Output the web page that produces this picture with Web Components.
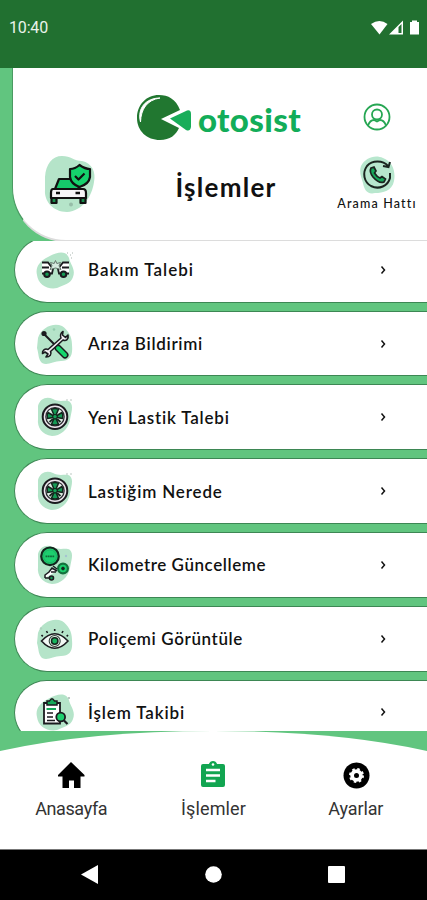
<!DOCTYPE html>
<html lang="tr">
<head>
<meta charset="utf-8">
<title>otosist</title>
<style>
  body {
    margin: 0;
    font-family: Lato, "Open Sans", sans-serif;
    color: #111;
  }
</style>
</head>
<body>
<oto-app></oto-app>

<script>
const BLOBS = {
  a: 'M3 26C1 18 6 12 14 8C23 3 32 1 35 9C36 15 42 20 39 28C37 35 29 36 23 39C13 41 4 35 3 26Z',
  b: 'M4 15C7 5 19-1 28 3C34 7 38 13 38 22C39 33 36 38 27 38C19 38 14 43 8 40C4 36 5 32 3 25Z',
  c: 'M4 10C6 2 13 0 19 3C26 7 32 3 36 6C40 10 37 17 36 24C34 34 26 40 18 40C8 39 3 31 4 23Z',
};

const WHEEL = `
  <circle cx="21" cy="20.7" r="12.3" fill="#ece6ec" stroke="#1b1b1f" stroke-width="2"/>
  <circle cx="21" cy="20.7" r="9.2" fill="#dfeee5" stroke="#2a2a30" stroke-width="1.2"/>
  <g fill="#159a55" stroke="#14251d" stroke-width="1.5" stroke-linejoin="round">
    <path d="M17.5 13.2Q21 11.8 24.5 13.2L22 19H20Z"/>
    <path d="M17.5 28.2Q21 29.6 24.5 28.2L22 22.4H20Z"/>
    <path d="M14 16.5L19 19.5V21.5L13.4 22.5Q12.600 19 14 16.500Z"/>
    <path d="M28 16.500L23 19.500V21.500L28.600 22.500Q29.400 19 28 16.500Z"/>
  </g>
  <path d="M15.500 26L19 23M26.500 26L23 23" stroke="#14251d" stroke-width="1.800"/>
  <circle cx="21" cy="20.7" r="2.2" fill="#13a558" stroke="#14251d"/>
  <path d="M32 4h2M36 4h2" stroke="#bcc9c2"/>`;

const ICONS = {
  crash: {
    blob: 'a',
    art: `
      <g fill="#fff" stroke="#1b1b1f" stroke-width="1.8">
        <path d="M8 13.500H14L19 20L18 24.500H8" />
        <path d="M35 13.500H29L24 20L25 24.500H35" />
        <path d="M8 18.500H15M35 18.500H28"/>
      </g>
      <path d="M21.5 11.500L22.800 14.500L26.500 13.500L25 16.800L27 20.500L21.500 19L16 20.500L18 16.800L16.500 13.500L20.200 14.500Z" fill="#d5eadf" stroke="#65776d"/>
      <g fill="#159a55" stroke="#1b1b1f" stroke-width="2">
        <circle cx="13" cy="25.3" r="2.8"/><circle cx="29.5" cy="25.3" r="2.8"/>
      </g>
      <path d="M33 4h1M36 6h1M38 4h1M37 9h1" stroke="#a8b5ae"/>`,
  },
  tools: {
    blob: 'b',
    art: `
      <path d="M9 10L23 24" stroke="#1b1b1f" stroke-width="2"/>
      <circle cx="10" cy="10.500" r="2.600" fill="#1b1b1f"/>
      <path d="M24 25L31 32" stroke="#1b1b1f" stroke-width="7" stroke-linecap="round"/>
      <path d="M24 25L31 32" stroke="#13d66c" stroke-width="4" stroke-linecap="round"/>
      <path d="M29 8.500C26.500 10 26 13 27 15L14 26.500C11 25 8 27.500 8.500 30.500L11 29L14 31L12 34C16 34 18 31 16.500 28.500L29 17C32 18.500 35 16 34 12L31.500 14.500L28.500 12Z" fill="#f3f0f3" stroke="#1b1b1f" stroke-width="1.600" stroke-linejoin="round"/>
      <circle cx="20" cy="6.500" r="1.300" fill="#94cdae"/>`,
  },
  wheel: { blob: 'c', art: WHEEL },
  gauge: {
    blob: 'c',
    art: `
      <circle cx="16" cy="12.300" r="8.800" fill="#1ccf6e" stroke="#14251d" stroke-width="2.200"/>
      <circle cx="16" cy="12.300" r="6.400" fill="none" stroke="#20b166"/>
      <path d="M11.500 12.300H20.500" stroke="#12683a" stroke-width="1.800" stroke-dasharray="1.800 .5"/>
      <circle cx="29" cy="24.500" r="4.900" fill="#1ccf6e" stroke="#14713d" stroke-width="2.200"/>
      <path d="M29 22.700V26.300M27.200 24.500H30.800" stroke="#14251d" stroke-width="1.800"/>
      <path d="M11 34V31L15 28L18 24L23 27M11 34H19M19 22L23 25M17 28H22" fill="#fff" stroke="#1b1b1f" stroke-width="1.500"/>
      <circle cx="17.500" cy="34" r="2" fill="#159a55" stroke="#1b1b1f" stroke-width="1.600"/>
      <circle cx="32" cy="12" r="1.200" fill="#a6c3d1"/>`,
  },
  eye: {
    blob: 'b',
    art: `
      <path d="M7.500 23Q20.700 8.500 34 23Q20.700 37.500 7.500 23Z" fill="#f2f8f4" stroke="#1b1b1f" stroke-width="1.600"/>
      <circle cx="20.700" cy="23" r="5.500" fill="#e2eee7" stroke="#34443b" stroke-width="1.100"/>
      <circle cx="20.700" cy="23" r="3.200" fill="#16b45e" stroke="#14251d" stroke-width="1.500"/>
      <path d="M20.700 11V13M12.500 13L13.500 15M29 13L28 15M7.500 17L8.800 18.400M34 17L32.700 18.400" stroke="#1b1b1f" stroke-width="1.600"/>
      <circle cx="7" cy="10.500" r="1.200" fill="#aed2be"/>`,
  },
  clipboard: {
    blob: 'a',
    art: `
      <path d="M10 12H26V32.500H10Z" fill="#fff" stroke="#1b1b1f" stroke-width="1.800"/>
      <path d="M13 10H15.500Q18 5.500 20.500 10H23V14H13Z" fill="#16a95a" stroke="#1b1b1f" stroke-width="1.500"/>
      <path d="M13 22H19M13 26H19M13 29.500H21" stroke="#1b1b1f" stroke-width="1.600"/>
      <path d="M12.500 18H22" stroke="#16a95a" stroke-width="2"/>
      <circle cx="26.700" cy="26" r="4.400" fill="#1ccf6e" stroke="#1b1b1f" stroke-width="1.800"/>
      <path d="M30 29.500L33.500 33" stroke="#1b1b1f" stroke-width="2.200"/>
      <circle cx="35" cy="7" r="1" fill="#a8b5ae"/>`,
  },
};

// Text spread to a fixed width, given in the width attribute
class FitText extends HTMLElement {
  constructor() {
    super();
    this.attachShadow({ mode: 'open' });
  }
  connectedCallback() {
    this.shadowRoot.innerHTML = `
    <style>
      :host { display: inline-block; white-space: nowrap; }
      span { display: inline-block; }
    </style>
    <span><slot></slot></span>`;
    const span = this.shadowRoot.querySelector('span');
    const count = this.textContent.length;
    const width = Number(this.getAttribute('width'));
    const spacing = (width - span.getBoundingClientRect().width) / count;
    span.style.letterSpacing = spacing + 'px';
  }
}

class StatusBar extends HTMLElement {
  constructor() {
    super();
    this.attachShadow({ mode: 'open' });
  }
  connectedCallback() {
    this.shadowRoot.innerHTML = `
    <style>
      :host {
        display: flex;
        justify-content: space-between;
        align-items: center;
        height: 68px;
        box-sizing: border-box;
        padding: 0 6px 13px 9px;
        background: #217030;
        color: #e9f3ea;
        font: 16px Roboto, sans-serif;
      }
    </style>
    <fit-text width="39">10:40</fit-text>
    <svg width="50" height="16" viewBox="0 0 50 16" fill="#fff">
      <path d="M0 4Q8.500-2 16.500 4L8.500 14.500Z"/>
      <path fill-rule="evenodd" d="M18 14.500L32 .5V14.500ZM27.500 7L30.500 4V13H27.500Z"/>
      <path d="M39 2H41V.5H46V2H48V14.500H39Z"/>
    </svg>`;
  }
}

class AppHeader extends HTMLElement {
  constructor() {
    super();
    this.attachShadow({ mode: 'open' });
  }
  connectedCallback() {
    this.shadowRoot.innerHTML = `
    <style>
      :host {
        display: grid;
        grid-template-columns: 112px 1fr 100px;
        grid-template-rows: 50px 58px;
        row-gap: 10px;
        height: 174px;
        box-sizing: border-box;
        margin-left: 12px;
        padding-top: 27px;
        background: #fff;
        border-left: 1px solid #4a9a62;
        border-bottom: 2px solid #dcdcdc;
        border-radius: 0 0 0 54px;
      }
      svg { display: block; }
      .logo {
        grid-column: 2;
        display: flex;
        align-items: flex-start;
        gap: 6px;
        padding-left: 12px;
        color: #12ad59;
        font-size: 33px;
        font-weight: 900;
        line-height: 45px;
      }
      .logo fit-text { margin-top: 2px; }
      .user { justify-self: center; padding-top: 8px; }
      .car { justify-self: center; padding-left: 1px; }
      .title {
        text-align: center;
        font-size: 26px;
        font-weight: 700;
        line-height: 65px;
      }
      .call {
        display: flex;
        flex-direction: column;
        align-items: center;
        font-size: 12.5px;
        font-weight: 500;
        line-height: 18px;
      }
    </style>
    <div class="logo">
      <svg width="55" height="46" viewBox="0 0 55 46">
        <path d="M43 15C39 4 31 0 22 0C9 0 0 10 0 23C0 36 10 45 23 45C33 45 39 40 42 33L24 24Z" fill="#217730"/>
        <path d="M3.500 27C0 13 9 3 23 3C10 5 4 14 3.500 27Z" fill="#fff" stroke="#fff"/>
        <path d="M33 23.500L50 15.500Q54 14.500 54 19V32Q53 37 49 35Z" fill="#18ad59"/>
      </svg>
      <fit-text width="103">otosist</fit-text>
    </div>
    <div class="user">
      <svg width="28" height="28" viewBox="0 0 28 28" fill="none" stroke="#26a653" stroke-width="1.8">
        <circle cx="14" cy="14" r="12.500"/>
        <circle cx="14" cy="11.500" r="5"/>
        <path d="M5 22.500Q7 17 11 17L14 18.500L17 17Q21 17 23 22.500"/>
      </svg>
    </div>
    <div class="car">
      <svg width="52" height="58" viewBox="0 0 52 58">
        <path d="M1 22C2 9 8 1 18 1C27 1 30 6 38 6C48 8 52 17 50 27C48 41 39 56 23 57C9 57 0 46 1 35Z" fill="#b5e4c9"/>
        <g stroke="#111" stroke-width="2.200" stroke-linejoin="round">
          <path d="M11 34L15 24H29L36 34Z" fill="#15c96a"/>
          <path d="M9 34H39Q42 34 42 38V43H7V38Q7 34 9 34Z" fill="#f7f5f7"/>
          <path d="M7.500 43H12.500V48H7.500ZM36.500 43H41.500V48H36.500Z" fill="#178b4b"/>
          <path d="M35.500 10Q41 14 46 14V22Q45 29 35.500 32Q27 29 26 22V14Q31 14 35.500 10Z" fill="#15d26c"/>
          <path d="M31 21L34.500 24.500L40.500 18.500" fill="none"/>
          <path d="M12 38H16M31.500 38H36" stroke-width="2.600"/>
        </g>
        <circle cx="27" cy="49.500" r="2" fill="#96bda8"/>
      </svg>
    </div>
    <div class="title"><fit-text width="101">İşlemler</fit-text></div>
    <div class="call">
      <svg width="40" height="40" viewBox="0 0 40 40">
        <path d="M4 11C8 3 18-1 26 3C35 6 39 16 37 26C35 36 26 38 18 38C10 40 7 34 6 28C4 22 2 17 4 11Z" fill="#b8e7ce"/>
        <path d="M31 11C26 5 15 5 10 11C5 18 7 27 14 31C22 35 31 31 33 23V18M33 7L31.500 12L26 11" fill="none" stroke="#1b2520" stroke-width="2"/>
        <path d="M14 13L17 12L19 16L17.500 18Q20 22 23 23L25 21.500L28.500 24L27 27Q22 29 16 22Q12 17 14 13Z" fill="#16a95a" stroke="#1b2520" stroke-width="1.700"/>
      </svg>
      <fit-text width="79">Arama Hattı</fit-text>
    </div>`;
  }
}

class MenuRow extends HTMLElement {
  constructor() {
    super();
    this.attachShadow({ mode: 'open' });
  }
  connectedCallback() {
    const icon = ICONS[this.getAttribute('icon')];
    this.shadowRoot.innerHTML = `
    <style>
      :host {
        display: flex;
        align-items: center;
        flex: none;
        height: 65.8px;
        box-sizing: border-box;
        margin-left: 14px;
        padding: 0 40px 0 19px;
        background: #fff;
        border: 1px solid #3d8754;
        border-right: 0;
        border-radius: 33px 0 0 33px;
        font-size: 17px;
        font-weight: 600;
      }
      .label { flex: 1; padding-left: 12px; }
    </style>
    <svg width="42" height="42" viewBox="0 0 42 42" fill="none">
      <path d="${BLOBS[icon.blob]}" fill="#b5e4c9"/>
      ${icon.art}
    </svg>
    <div class="label"><slot></slot></div>
    <svg width="8" height="10" viewBox="0 0 8 10" fill="none" stroke="#111" stroke-width="1.500">
      <path d="M2.500 1.500L5.500 5L2.500 8.500"/>
    </svg>`;
  }
}

class NavItem extends HTMLElement {
  constructor() {
    super();
    this.attachShadow({ mode: 'open' });
  }
  connectedCallback() {
    this.shadowRoot.innerHTML = `
    <style>
      :host {
        display: flex;
        flex-direction: column;
        align-items: center;
        gap: 8px;
        font: 18px/24px Roboto, sans-serif;
        color: #333;
      }
    </style>
    <slot name="icon"></slot>
    <slot></slot>`;
  }
}

class TabBar extends HTMLElement {
  constructor() {
    super();
    this.attachShadow({ mode: 'open' });
  }
  connectedCallback() {
    this.shadowRoot.innerHTML = `
    <style>
      :host {
        display: grid;
        grid-template-columns: repeat(3, 1fr);
        height: 118px;
        box-sizing: border-box;
        padding-top: 30px;
        background: #fff;
        clip-path: path('M0 20Q90 0 213.5 0Q337 0 427 20V118H0Z');
      }
      svg { display: block; }
    </style>
    <nav-item>
      <svg slot="icon" width="28" height="28" viewBox="0 0 28 28">
        <path d="M14 1L27.500 14V15.500H23.500V27H17V19.500H12V27H5.500V15.500H1V14Z"/>
      </svg>
      <fit-text width="72">Anasayfa</fit-text>
    </nav-item>
    <nav-item>
      <svg slot="icon" width="28" height="28" viewBox="0 0 28 28">
        <path d="M4 3H10Q11 0 14 0Q17 0 18 3H24Q26 3 26 5V24Q26 26 24 26H4Q2 26 2 24V5Q2 3 4 3Z" fill="#12a551"/>
        <circle cx="14" cy="3.500" r="1.300" fill="#fff"/>
        <path d="M7 9H21M7 14.500H21M7 20H16.500" stroke="#fff" stroke-width="2.500"/>
      </svg>
      <fit-text width="65">İşlemler</fit-text>
    </nav-item>
    <nav-item>
      <svg slot="icon" width="28" height="28" viewBox="0 0 28 28">
        <circle cx="14.500" cy="14.500" r="13"/>
        <circle cx="14.500" cy="14.500" r="6.200" fill="#fff" stroke="#fff" stroke-width="2.600" stroke-dasharray="2.400 2.470"/>
        <circle cx="14.500" cy="14.500" r="2.500"/>
      </svg>
      <fit-text width="55">Ayarlar</fit-text>
    </nav-item>`;
  }
}

class SystemBar extends HTMLElement {
  constructor() {
    super();
    this.attachShadow({ mode: 'open' });
  }
  connectedCallback() {
    this.shadowRoot.innerHTML = `
    <style>
      :host {
        display: flex;
        justify-content: space-between;
        align-items: center;
        height: 51px;
        box-sizing: border-box;
        padding: 0 81px 2px 80px;
        background: #000;
        border-top: 1px solid #777;
      }
    </style>
    <svg width="20" height="20" fill="#fff"><path d="M1 10.500L18 1V20Z"/></svg>
    <svg width="20" height="20" fill="#fff"><circle cx="10.500" cy="10.500" r="8.300"/></svg>
    <svg width="20" height="20" fill="#fff"><rect x="2" y="2" width="17" height="17" rx="1"/></svg>`;
  }
}

class OtoApp extends HTMLElement {
  constructor() {
    super();
    this.attachShadow({ mode: 'open' });
  }
  connectedCallback() {
    this.shadowRoot.innerHTML = `
    <style>
      :host {
        display: flex;
        flex-direction: column;
        width: 427px;
        height: 900px;
        background: #61c57f;
        overflow: hidden;
      }
      .list {
        flex: 1;
        min-height: 0;
        display: flex;
        flex-direction: column;
        justify-content: flex-end;
        gap: 8px;
        overflow: hidden;
        margin-top: -1px;
      }
      /* the list is scrolled, its last row runs under the tab bar */
      menu-row:last-child { margin-bottom: -14.400px; }
    </style>
    <status-bar></status-bar>
    <app-header></app-header>
    <div class="list">
      <menu-row icon="crash"><fit-text width="106">Bakım Talebi</fit-text></menu-row>
      <menu-row icon="tools"><fit-text width="115">Arıza Bildirimi</fit-text></menu-row>
      <menu-row icon="wheel"><fit-text width="142">Yeni Lastik Talebi</fit-text></menu-row>
      <menu-row icon="wheel"><fit-text width="135">Lastiğim Nerede</fit-text></menu-row>
      <menu-row icon="gauge"><fit-text width="178">Kilometre Güncelleme</fit-text></menu-row>
      <menu-row icon="eye"><fit-text width="155">Poliçemi Görüntüle</fit-text></menu-row>
      <menu-row icon="clipboard"><fit-text width="97">İşlem Takibi</fit-text></menu-row>
    </div>
    <tab-bar></tab-bar>
    <system-bar></system-bar>`;
  }
}

customElements.define('fit-text', FitText);
customElements.define('status-bar', StatusBar);
customElements.define('app-header', AppHeader);
customElements.define('menu-row', MenuRow);
customElements.define('nav-item', NavItem);
customElements.define('tab-bar', TabBar);
customElements.define('system-bar', SystemBar);
customElements.define('oto-app', OtoApp);
</script>
</body>
</html>
